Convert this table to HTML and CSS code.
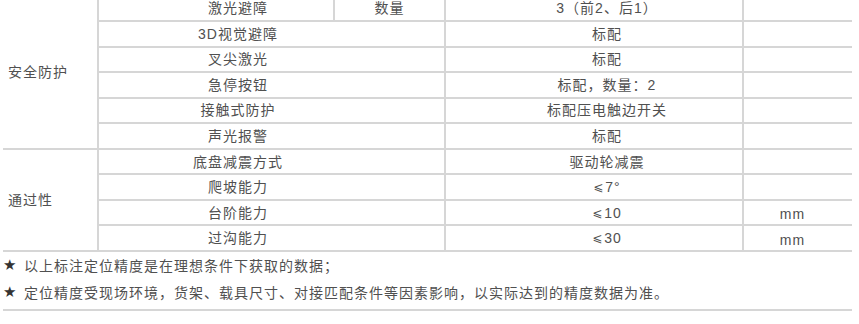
FILE: index.html
```html
<!DOCTYPE html>
<html lang="zh-CN">
<head>
<meta charset="utf-8">
<link rel="stylesheet" href="styles.css">
</head>
<body>
<div class="page">
  <div class="spec">
    <div class="cat cat-safe">安全防护</div>
    <div class="c item-narrow">激光避障</div>
    <div class="c sub">数量</div>
    <div class="c val">3（前2、后1）</div>
    <div class="c unit"></div>

    <div class="c item">3D视觉避障</div>
    <div class="c val">标配</div>
    <div class="c unit"></div>

    <div class="c item">叉尖激光</div>
    <div class="c val">标配</div>
    <div class="c unit"></div>

    <div class="c item">急停按钮</div>
    <div class="c val">标配，数量：2</div>
    <div class="c unit"></div>

    <div class="c item">接触式防护</div>
    <div class="c val">标配压电触边开关</div>
    <div class="c unit"></div>

    <div class="c item">声光报警</div>
    <div class="c val">标配</div>
    <div class="c unit"></div>

    <div class="cat cat-pass">通过性</div>
    <div class="c item">底盘减震方式</div>
    <div class="c val">驱动轮减震</div>
    <div class="c unit"></div>

    <div class="c item">爬坡能力</div>
    <div class="c val"><span class="le">⩽</span>7°</div>
    <div class="c unit"></div>

    <div class="c item">台阶能力</div>
    <div class="c val"><span class="le">⩽</span>10</div>
    <div class="c unit">mm</div>

    <div class="c item">过沟能力</div>
    <div class="c val"><span class="le">⩽</span>30</div>
    <div class="c unit">mm</div>
  </div>

  <div class="notes">
    <p class="note"><span class="star">★</span>以上标注定位精度是在理想条件下获取的数据；</p>
    <p class="note"><span class="star">★</span>定位精度受现场环境，货架、载具尺寸、对接匹配条件等因素影响，以实际达到的精度数据为准。</p>
  </div>
</div>
</body>
</html>
```

FILE: styles.css
```css
html, body {
  margin: 0;
  padding: 0;
  background: #ffffff;
}

body {
  font-family: "Liberation Sans", "Noto Sans CJK SC", sans-serif;
  font-size: 14px;
  color: #505050;
  overflow: hidden;
}

.page {
  width: 849px;
  margin: -3.5px 0 0 3px;
}

.spec {
  display: grid;
  grid-template-columns: 94px 236px 111px 298px 110px;
  grid-template-rows: repeat(10, 25.55px);
}

.c,
.cat {
  box-sizing: border-box;
  display: flex;
  align-items: center;
  justify-content: center;
  border-bottom: 2px solid #d6d6d6;
  letter-spacing: 1px;
  white-space: nowrap;
  line-height: 1;
}

.c {
  border-left: 2px solid #d6d6d6;
}

.cat {
  grid-column: 1;
  justify-content: flex-start;
  padding-left: 5px;
}

.cat-safe {
  grid-row: 1 / span 6;
}

.cat-pass {
  grid-row: 7 / span 4;
}

.item-narrow {
  grid-column: 2;
  padding-left: 44px;
}

.sub {
  grid-column: 3;
}

.item {
  grid-column: 2 / span 2;
  padding-right: 67px;
}

.val {
  grid-column: 4;
  padding-left: 26px;
}

.le {
  font-family: "DejaVu Sans", sans-serif;
  font-size: 12px;
  margin-right: 1px;
}

.unit {
  grid-column: 5;
  padding-right: 11px;
  padding-top: 3px;
}

.notes {
  border-bottom: 2px solid #d6d6d6;
  padding-bottom: 3px;
}

.note {
  margin: 0;
  display: flex;
  align-items: center;
  height: 27px;
  letter-spacing: 1px;
  white-space: nowrap;
}

.star {
  display: inline-block;
  width: 21px;
  font-family: "DejaVu Sans", sans-serif;
  font-size: 15px;
  color: #333333;
  letter-spacing: 0;
}
```
